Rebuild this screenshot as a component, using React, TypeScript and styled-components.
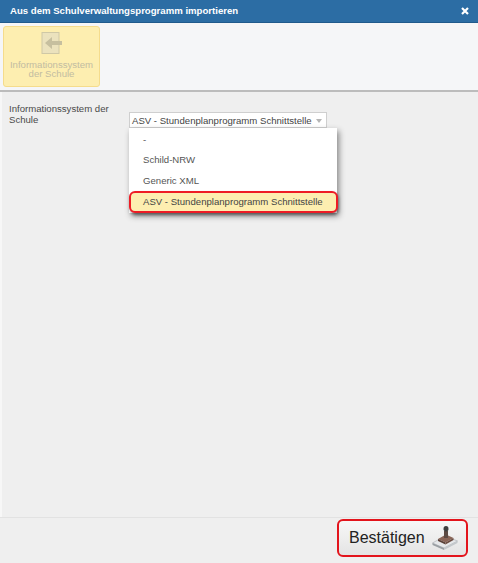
import styled, { createGlobalStyle } from 'styled-components';

const Global = createGlobalStyle`
  html, body {
    margin: 0;
    padding: 0;
    height: 100%;
    background: #efefef;
  }

  #root {
    height: 100%;
  }

  * {
    box-sizing: border-box;
  }
`;

const Dialog = styled.div`
  width: 478px;
  height: 563px;
  display: flex;
  flex-direction: column;
  overflow: hidden;
  background: #efefef;
  font-family: 'Liberation Sans', Arial, sans-serif;
  color: #444;
`;

const TitleBar = styled.div`
  flex: 0 0 23px;
  padding: 0 9px 1px 10px;
  display: flex;
  align-items: center;
  justify-content: space-between;
  background: #2c6da4;
  border-bottom: 1px solid #205a8c;
  color: #fff;
  font-size: 9.6px;
  font-weight: bold;
`;

const Toolbar = styled.div`
  flex: 0 0 69px;
  padding: 3px;
  background: #f5f6f8;
  border-bottom: 2px solid #bcbcbc;
`;

const ToolButton = styled.div`
  width: 97px;
  height: 61px;
  padding-top: 5px;
  display: flex;
  flex-direction: column;
  align-items: center;
  background: #fdeeb0;
  border: 1px solid #f5dc8c;
  border-radius: 3px;
  color: #c2bca2;
  font-size: 9.6px;
  line-height: 9px;
  text-align: center;
`;

const ToolIcon = styled.svg`
  width: 22px;
  height: 22px;
  margin-bottom: 6px;
`;

const Content = styled.div`
  flex: 1;
  position: relative;
  padding: 11px 0 0 7px;
  display: flex;
  align-items: flex-start;
  border-left: 2px solid #f7f7f7;
`;

const FieldLabel = styled.div`
  width: 120px;
  font-size: 9.6px;
  line-height: 11px;
  color: #4a4a4a;
`;

const Select = styled.div`
  width: 198px;
  height: 16px;
  margin-top: 9px;
  padding: 0 4px 0 2px;
  display: flex;
  align-items: center;
  justify-content: space-between;
  background: #fff;
  border: 1px solid #cfcfcf;
  font-size: 9.6px;
  color: #444;
  white-space: nowrap;
`;

const Caret = styled.span`
  width: 0;
  height: 0;
  margin-top: 2px;
  border-left: 3px solid transparent;
  border-right: 3px solid transparent;
  border-top: 4px solid #b5b5b5;
`;

const Menu = styled.div`
  position: absolute;
  left: 127px;
  top: 36px;
  width: 208px;
  height: 85px;
  padding-top: 1px;
  background: #fff;
  box-shadow: 2px 3px 6px rgba(0, 0, 0, 0.45);
`;

const Option = styled.div<{ $selected?: boolean }>`
  height: 20.67px;
  padding-left: 14px;
  display: flex;
  align-items: center;
  font-size: 9.6px;
  color: #555;
  white-space: nowrap;
  ${(p) =>
    p.$selected &&
    `
    height: 22px;
    width: 209px;
    padding-left: 12px;
    padding-bottom: 1px;
    background: #fdeeb0;
    border: 2px solid #ee1c25;
    border-radius: 6px;
    box-shadow: 1px 2px 3px rgba(0, 0, 0, 0.4);
    color: #444;
  `}
`;

const Footer = styled.div`
  flex: 0 0 46px;
  padding: 1px 10px 0 0;
  display: flex;
  justify-content: flex-end;
  align-items: flex-start;
  border-top: 1px solid #e2e2e2;
`;

const ConfirmButton = styled.button`
  width: 131px;
  height: 38px;
  padding: 0 0 0 10px;
  display: flex;
  align-items: center;
  gap: 7px;
  background: linear-gradient(#f7f7f7, #e4e4e4);
  border: 2px solid #e3141c;
  border-radius: 6px;
  font-family: inherit;
  font-size: 16px;
  color: #222;
`;

const Stamp = () => (
  <svg width="26" height="24" viewBox="0 0 26 24">
    <path d="M0.5 17 L13 10 L25.5 15 L12 22 Z" fill="#e6e8ea" stroke="#a8adb1" strokeWidth="0.6" />
    <path d="M0.5 17 L12 22 L12 24 L0.5 19 Z" fill="#9a9fa3" />
    <path d="M12 22 L25.5 15 L25.5 17 L12 24 Z" fill="#c4c8cb" />
    <path d="M6 13 L14 8.5 L21.5 12 L13.5 16.5 Z" fill="#8a6557" />
    <path d="M6 13 L13.5 16.5 L13.5 18.5 L6 15 Z" fill="#5a4037" />
    <path d="M13.5 16.5 L21.5 12 L21.5 14 L13.5 18.5 Z" fill="#6b4c41" />
    <rect x="12" y="5" width="4" height="7" fill="#5d4a43" />
    <ellipse cx="14" cy="2.8" rx="2.5" ry="2.7" fill="#3f3f3f" />
  </svg>
);

export default function App() {
  return (
    <Dialog>
      <Global />
      <TitleBar>
        Aus dem Schulverwaltungsprogramm importieren
        <svg width="8" height="8" viewBox="0 0 8 8">
          <path d="M1 1 L7 7 M7 1 L1 7" stroke="#fff" strokeWidth="2.2" />
        </svg>
      </TitleBar>
      <Toolbar>
        <ToolButton>
          <ToolIcon viewBox="0 0 22 22">
            <rect x="1" y="0.5" width="17" height="21" fill="#ebe2bd" stroke="#cfc8a6" />
            <path d="M21 9 H11 V5 L4 11 L11 17 V13 H21 Z" fill="#c6bf9f" />
          </ToolIcon>
          Informationssystem
          <br />
          der Schule
        </ToolButton>
      </Toolbar>
      <Content>
        <FieldLabel>
          Informationssystem der
          <br />
          Schule
        </FieldLabel>
        <Select>
          ASV - Stundenplanprogramm Schnittstelle
          <Caret />
        </Select>
        <Menu>
          <Option>-</Option>
          <Option>Schild-NRW</Option>
          <Option>Generic XML</Option>
          <Option $selected>ASV - Stundenplanprogramm Schnittstelle</Option>
        </Menu>
      </Content>
      <Footer>
        <ConfirmButton>
          Bestätigen
          <Stamp />
        </ConfirmButton>
      </Footer>
    </Dialog>
  );
}
